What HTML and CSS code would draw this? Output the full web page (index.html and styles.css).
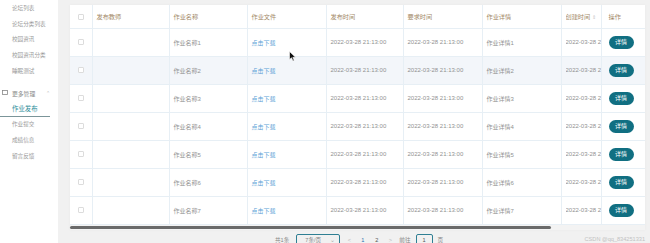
FILE: index.html
```html
<!DOCTYPE html>
<html lang="zh">
<head>
    <meta charset="UTF-8">
    <title>作业发布</title>
    <link rel="stylesheet" href="styles.css">
</head>
<body>
    <div class="page">
        <div class="side">
            <div class="side-item">论坛列表</div>
            <div class="side-item">论坛分类列表</div>
            <div class="side-item">校园资讯</div>
            <div class="side-item">校园资讯分类</div>
            <div class="side-item">睡眠测试</div>
            <div class="side-group">
                <svg class="grp-icon" width="6" height="6" viewBox="0 0 6 6"><rect x="0.5" y="0.5" width="5" height="4" fill="none" stroke="#888" stroke-width="0.8"/></svg>
                <span>更多管理</span>
                <span class="grp-arrow">⌃</span>
            </div>
            <div class="side-item active">作业发布</div>
            <div class="side-item">作业提交</div>
            <div class="side-item">成绩信息</div>
            <div class="side-item">留言反馈</div>
        </div>

        <div class="main">
            <div class="card">
                <table class="grid">
                    <colgroup>
                        <col style="width:22px">
                        <col style="width:77px">
                        <col style="width:78px">
                        <col style="width:79px">
                        <col style="width:77px">
                        <col style="width:79px">
                        <col style="width:79px">
                        <col style="width:40px">
                        <col style="width:44px">
                    </colgroup>
                    <thead>
                        <tr>
                            <th class="chk-cell"><span class="chk"></span></th>
                            <th>发布教师</th>
                            <th>作业名称</th>
                            <th>作业文件</th>
                            <th>发布时间</th>
                            <th>要求时间</th>
                            <th>作业详情</th>
                            <th class="clip"><div class="clip-box">创建时间 <span class="sort">⇕</span></div></th>
                            <th class="fixed">操作</th>
                        </tr>
                    </thead>
                    <tbody id="rows"></tbody>
                </table>
                <div class="scroll-track"><div class="scroll-thumb"></div></div>
            </div>

            <div class="pager">
                <span>共1条</span>
                <span class="pg-size">7条/页 <span class="caret">⌄</span></span>
                <span class="pg-btn">&lt;</span>
                <span class="pg-num cur">1</span>
                <span class="pg-num">2</span>
                <span class="pg-btn">&gt;</span>
                <span>前往</span>
                <span class="pg-input">1</span>
                <span>页</span>
            </div>
            <div class="mark">CSDN @qq_834251331</div>
        </div>
    </div>

    <svg class="cursor" width="8" height="11" viewBox="0 0 8 11"><path d="M0.5 0.5 L0.5 8.5 L2.5 6.8 L4 10 L5.2 9.4 L3.8 6.3 L6.5 6.3 Z" fill="#111" stroke="#fff" stroke-width="0.6"/></svg>

    <script>
        var tbody = document.getElementById('rows');
        var html = '';
        for (var i = 1; i <= 7; i++) {
            html += '<tr' + (i == 2 ? ' class="hover"' : '') + '>' +
                '<td class="chk-cell"><span class="chk"></span></td>' +
                '<td></td>' +
                '<td>作业名称' + i + '</td>' +
                '<td><a class="dl" href="javascript:;">点击下载</a></td>' +
                '<td>2022-03-28 21:13:00</td>' +
                '<td>2022-03-28 21:13:00</td>' +
                '<td>作业详情' + i + '</td>' +
                '<td class="clip"><div class="clip-box">2022-03-28 2</div></td>' +
                '<td class="fixed"><span class="btn">详情</span></td>' +
                '</tr>';
        }
        tbody.innerHTML = html;
    </script>
</body>
</html>
```

FILE: styles.css
```css
* {
    margin: 0px;
    padding: 0px;
    box-sizing: border-box;
}

body {
    width: 650px;
    height: 243px;
    overflow: hidden;
    background: #f1f1f1;
    font-family: "Liberation Sans", "Noto Sans CJK SC", sans-serif;
    color: #8c8c8c;
}

.page {
    display: flex;
    height: 243px;
}

.side {
    width: 58px;
    background: #ffffff;
    padding-top: 1px;
}

.side-item {
    height: 15.7px;
    line-height: 15.7px;
    padding-left: 12px;
    font-size: 5.6px;
    color: #9a9a9a;
    white-space: nowrap;
}

.side-item.active {
    color: #2a8c98;
    font-size: 6.4px;
    border-bottom: 1px solid #7b9599;
    margin-right: 8px;
    height: 16px;
    line-height: 15px;
}

.side-group {
    display: flex;
    align-items: center;
    height: 16px;
    margin-top: 6px;
    padding-left: 2px;
    font-size: 5.8px;
    color: #8a8a8a;
}

.side-group span:nth-child(2) {
    margin-left: 4px;
}

.grp-arrow {
    margin-left: auto;
    margin-right: 8px;
    font-size: 5px;
    color: #bbb;
}

.main {
    padding: 5px 5px 0px 12px;
    width: 592px;
    position: relative;
}

.card {
    width: 575px;
    background: #ffffff;
    box-shadow: 0px 0px 3px rgba(0, 0, 0, .04);
}

.grid {
    width: 575px;
    table-layout: fixed;
    border-collapse: collapse;
    font-size: 6px;
}

.grid th,
.grid td {
    text-align: left;
    padding: 0px 3px 0px 4px;
    border-right: 1px solid #e7eff5;
    border-bottom: 1px solid #e7eff5;
    white-space: nowrap;
    overflow: hidden;
    color: #929292;
    font-weight: normal;
}

.grid th {
    height: 23px;
    color: #a38a68;
    font-size: 6.2px;
}

.grid td {
    height: 28px;
}

.grid tr.hover td {
    background: #f3f6fa;
}

.grid .chk-cell {
    text-align: center;
    padding: 0px;
}

.chk {
    display: inline-block;
    width: 6px;
    height: 6px;
    border: 1px solid #dcdcdc;
    border-radius: 1px;
    background: #fff;
    vertical-align: middle;
}

.grid .clip {
    padding-right: 0px;
}

.clip-box {
    width: 35px;
    overflow: hidden;
    white-space: nowrap;
}

.sort {
    color: #c8c8c8;
    font-size: 5px;
}

.grid .fixed {
    border-right: none;
    box-shadow: -2px 0px 3px rgba(0, 0, 0, .06);
    padding-left: 7px;
    background: #ffffff;
}

.dl {
    color: #5a9fd6;
    text-decoration: none;
}

.btn {
    display: inline-block;
    width: 25px;
    height: 13px;
    line-height: 13px;
    text-align: center;
    border-radius: 7px;
    background: #116f82;
    color: #ffffff;
    font-size: 6px;
}

.scroll-track {
    height: 5px;
    background: #f3f3f3;
    padding-top: 1px;
}

.scroll-thumb {
    width: 481px;
    height: 3px;
    border-radius: 2px;
    background: #6a6a6a;
}

.pager {
    display: flex;
    align-items: center;
    margin-top: 3px;
    padding-left: 205px;
    height: 14px;
    font-size: 5.6px;
    color: #888;
}

.pager > span {
    margin-right: 5px;
}

.pg-size {
    width: 44px;
    height: 12px;
    line-height: 11px;
    border: 1px solid #2f7f93;
    border-radius: 2px;
    padding-left: 8px;
    margin-left: 2px;
}

.caret {
    float: right;
    margin-right: 4px;
    color: #aaa;
}

.pg-btn {
    color: #bbb;
    width: 8px;
    text-align: center;
}

.pg-num {
    width: 9px;
    text-align: center;
    color: #555;
}

.pg-num.cur {
    color: #2a6fb0;
}

.pg-input {
    width: 17px;
    height: 12px;
    line-height: 11px;
    border: 1px solid #2f7f93;
    border-radius: 2px;
    text-align: center;
    color: #555;
}

.mark {
    position: absolute;
    right: 5px;
    bottom: 1px;
    font-size: 5.6px;
    color: #c2c2c2;
}

.cursor {
    position: absolute;
    left: 289px;
    top: 51px;
}
```
